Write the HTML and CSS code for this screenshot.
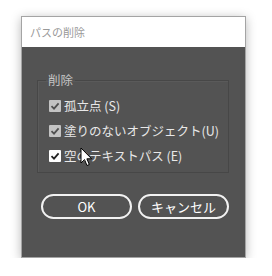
FILE: index.html
```
<!DOCTYPE html>
<html lang="ja">
<head>
    <meta charset="UTF-8">
    <title>パスの削除</title>
    <link rel="stylesheet" href="styles.css">
</head>
<body>
    <div class="dialog">
        <div class="titlebar">パスの削除</div>
        <div class="content">
            <fieldset class="group">
                <legend>削除</legend>
                <div class="row"><span class="box"><svg viewBox="0 0 12 12"><path d="M2.5 6.2 L5 8.6 L9.6 3.4" /></svg></span>孤立点 (S)</div>
                <div class="row"><span class="box"><svg viewBox="0 0 12 12"><path d="M2.5 6.2 L5 8.6 L9.6 3.4" /></svg></span>塗りのないオブジェクト(U)</div>
                <div class="row"><span class="box hot"><svg viewBox="0 0 12 12"><path d="M2.5 6.2 L5 8.6 L9.6 3.4" /></svg></span>空のテキストパス (E)</div>
            </fieldset>
            <div class="buttons">
                <button class="btn ok">OK</button>
                <button class="btn">キャンセル</button>
            </div>
            <svg class="cursor" viewBox="0 0 13 21" width="13" height="21">
                <path d="M1 1 L1 16 L4.5 12.6 L7 18.5 L9.3 17.5 L6.9 11.8 L11.6 11.8 Z" fill="#fff" stroke="#000" stroke-width="1" stroke-linejoin="round" />
            </svg>
        </div>
    </div>
</body>
</html>
```

FILE: styles.css
```
body {
    margin: 0;
    background-color: #fff;
    font-family: "Noto Sans CJK JP", "Noto Sans", sans-serif;
}
.dialog {
    margin: 16px 0 0 21px;
    width: 223px;
    height: 240px;
    border: 1px solid #a4a4a4;
    box-shadow: 0 2px 10px rgba(0, 0, 0, 0.28);
    display: flex;
    flex-direction: column;
}
.titlebar {
    height: 30px;
    line-height: 30px;
    padding-left: 8px;
    background-color: #fff;
    color: #999;
    font-size: 11px;
}
.content {
    flex: 1;
    background-color: #535353;
    position: relative;
    padding: 25px 16px 0 15px;
}
.group {
    margin: 0;
    padding: 5px 0 9px 10px;
    border: 1px solid #474747;
    box-shadow: inset 1px 1px 0 #5a5a5a;
    height: 85px;
}
.group legend {
    padding: 0 2px;
    margin-left: -2px;
    color: #c4c4c4;
    font-size: 12.5px;
    line-height: 16px;
}
.row {
    display: flex;
    align-items: center;
    height: 25px;
    color: #e8e8e8;
    font-size: 12.5px;
}
.box {
    width: 12px;
    height: 12px;
    margin-left: 1px;
    margin-right: 3px;
    background-color: #c3c3c3;
    border-radius: 1px;
    display: flex;
}
.box svg {
    width: 12px;
    height: 12px;
    fill: none;
    stroke: #505050;
    stroke-width: 1.8;
}
.box.hot {
    background-color: #fff;
}
.box.hot svg {
    stroke: #222;
}
.buttons {
    display: flex;
    gap: 6px;
    margin-top: 21px;
    padding-left: 4px;
}
.btn {
    width: 91px;
    height: 25px;
    border: 2px solid #f2f2f2;
    border-radius: 13px;
    background-color: transparent;
    color: #fff;
    font-family: "Noto Sans CJK JP", "Noto Sans", sans-serif;
    font-size: 13px;
    padding: 0;
}
.cursor {
    position: absolute;
    left: 58px;
    top: 100px;
}
```
